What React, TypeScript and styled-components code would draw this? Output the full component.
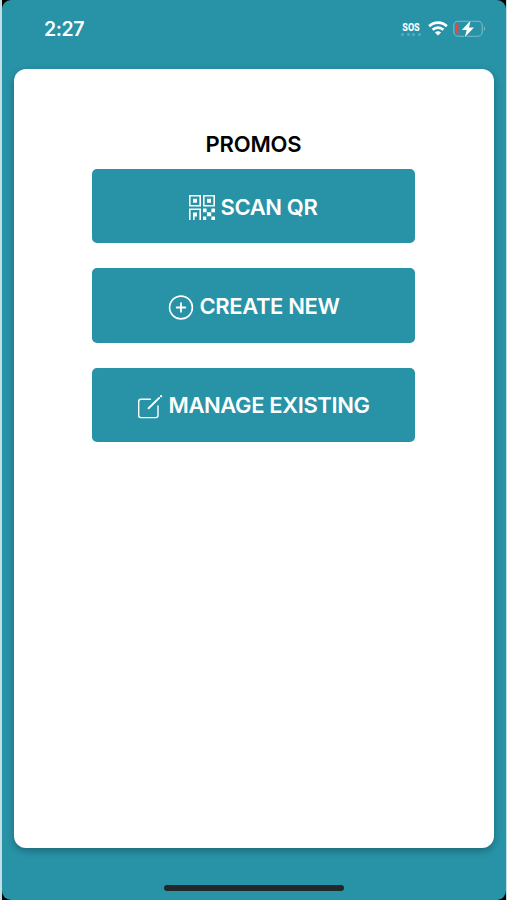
import React from 'react';
import styled, { createGlobalStyle } from 'styled-components';

const TEAL = '#2892a6';

const App = () => {
  return (
    <>
      <GlobalStyle />
      <Device>
        <Screen>
          <StatusBar>
            <Time>2:27</Time>
            <StatusIcons>
              <Sos>
                <span>SOS</span>
                <Dots>
                  <i />
                  <i />
                  <i />
                  <i />
                </Dots>
              </Sos>
              <WifiIcon />
              <BatteryIcon />
            </StatusIcons>
          </StatusBar>
          <Card>
            <Title>PROMOS</Title>
            <Menu>
              <MenuButton>
                <QrIcon />
                <Label $width={98}>SCAN QR</Label>
              </MenuButton>
              <MenuButton>
                <PlusIcon />
                <Label $width={140}>CREATE NEW</Label>
              </MenuButton>
              <MenuButton>
                <EditIcon />
                <Label $width={202}>MANAGE EXISTING</Label>
              </MenuButton>
            </Menu>
          </Card>
          <HomeBar />
        </Screen>
      </Device>
    </>
  );
};

export default App;

const WifiIcon = () => (
  <svg width="20" height="15" viewBox="0 0 20 15" fill="none" stroke="#fff">
    <path d="M1.2 5.2C6.2 0.4 13.8 0.4 18.8 5.2" strokeWidth="2.9" />
    <path d="M4.6 8.8C7.7 5.9 12.3 5.9 15.4 8.8" strokeWidth="2.6" />
    <path d="M10 14.6L6.9 11.5C8.6 9.9 11.4 9.9 13.1 11.5Z" fill="#fff" stroke="none" />
  </svg>
);

const BatteryIcon = () => (
  <svg width="33" height="18" viewBox="0 0 33 18" fill="none">
    <rect x="0.8" y="1.3" width="28.4" height="14.9" rx="4.2" stroke="#7dbcc9" strokeWidth="1.1" />
    <path d="M31 6.6C32.6 7.3 32.6 10.2 31 10.9Z" fill="#7dbcc9" />
    <path d="M5.3 3.3V14.2H4.6C3.3 14.2 2.7 13.4 2.7 12.2V5.3C2.7 4.1 3.3 3.3 4.6 3.3Z" fill="#e8483f" />
    <path
      d="M17.6 0.6L8.8 9.9H13.7L11.7 17.2L21 7.4H16Z"
      fill="#fff"
      stroke={TEAL}
      strokeWidth="1.4"
      strokeLinejoin="round"
      paintOrder="stroke"
    />
  </svg>
);

const QrIcon = () => (
  <svg width="26" height="25" viewBox="0 0 26 25" fill="#fff">
    <path
      fillRule="evenodd"
      d="M0 0H12V11.6H0ZM1.6 1.6V10H10.4V1.6ZM14 0H26V11.6H14ZM15.6 1.6V10H24.4V1.6ZM0 13.4H12V25H10.4V15H1.6V25H0Z"
    />
    <path d="M4 3.8H8V7.8H4ZM18 3.8H22V7.8H18ZM4 17.4H8V21.4H4ZM4 21.4H5.6V25H4Z" />
    <path d="M14 13.6H17.6V17.2H14ZM22.4 13.6H26V17.2H22.4ZM18 17.2H22.2V21.2H18ZM14 21.6H17.2V25H14ZM22.4 21.4H26V25H22.4Z" />
  </svg>
);

const PlusIcon = () => (
  <svg width="26" height="25" viewBox="0 0 26 25" fill="none" stroke="#fff" strokeLinecap="round">
    <circle cx="13" cy="12.5" r="11.4" strokeWidth="1.6" />
    <path d="M13 8.2V16.8M8.7 12.5H17.3" strokeWidth="1.8" />
  </svg>
);

const EditIcon = () => (
  <svg
    width="26"
    height="25"
    viewBox="0 0 26 25"
    fill="none"
    stroke="#fff"
    strokeWidth="1.4"
    strokeLinecap="round"
    strokeLinejoin="round"
  >
    <path d="M13.4 5.2H3.9C2.5 5.2 1.7 6 1.7 7.4V21.6C1.7 22.8 2.5 23.6 3.9 23.6H18.8C20.2 23.6 21 22.8 21 21.6V12" />
    <path d="M11.6 14.3L22.2 3.9" strokeWidth="1.9" />
    <path d="M23.9 2L24.3 2.4" strokeWidth="1.9" />
  </svg>
);

const GlobalStyle = createGlobalStyle`
  * {
    box-sizing: border-box;
  }
  body {
    margin: 0;
    background-color: #c3dfe5;
    font-family: Inter, 'Liberation Sans', sans-serif;
  }
`;

const Device = styled.div`
  height: 900px;
  margin: 0 1.5px;
  background-color: #000;
`;

const Screen = styled.div`
  display: flex;
  flex-direction: column;
  align-items: center;
  height: 900px;
  border-radius: 9px;
  background-color: ${TEAL};
`;

const StatusBar = styled.div`
  display: flex;
  justify-content: space-between;
  width: 100%;
  height: 69px;
  padding: 18px 19.5px 0 42.5px;
  color: #fff;
`;

const Time = styled.div`
  height: 22px;
  font-size: 19.5px;
  font-weight: 600;
  line-height: 22px;
  letter-spacing: -0.4px;
`;

const StatusIcons = styled.div`
  display: flex;
  align-items: flex-start;
  padding-top: 2px;
  svg {
    display: block;
  }
  svg:nth-child(2) {
    margin: 1px 5px 0 7px;
  }
`;

const Sos = styled.div`
  width: 20px;
  padding-top: 2px;
  font-family: Roboto, sans-serif;
  font-size: 9px;
  font-weight: 800;
  line-height: 10px;
  text-align: center;
  span {
    display: block;
    transform: scaleY(1.25);
  }
`;

const Dots = styled.div`
  display: flex;
  justify-content: space-between;
  margin-top: 1px;
  i {
    width: 3px;
    height: 3px;
    border-radius: 50%;
    background-color: #5cabba;
  }
`;

const Card = styled.div`
  display: flex;
  flex-direction: column;
  align-items: center;
  width: 480px;
  height: 778.5px;
  padding-top: 61px;
  border-radius: 12px;
  background-color: #fff;
  box-shadow: 0 3px 7px rgba(0, 0, 0, 0.28);
`;

const Title = styled.h1`
  margin: 0;
  font-size: 22px;
  font-weight: 600;
  line-height: 28px;
  letter-spacing: -0.15px;
  color: #000;
`;

const Menu = styled.div`
  display: grid;
  grid-row-gap: 25px;
  margin-top: 11px;
`;

const MenuButton = styled.button`
  display: flex;
  align-items: center;
  justify-content: center;
  width: 323px;
  height: 74.4px;
  padding: 2px 0 0;
  border: none;
  border-radius: 5px;
  background-color: ${TEAL};
  color: #fff;
  svg {
    flex: none;
    margin-top: 1px;
  }
`;

const Label = styled.span<{ $width: number }>`
  width: ${({ $width }) => $width}px;
  margin: -1px 0 0 6px;
  font-family: Inter, 'Liberation Sans', sans-serif;
  font-size: 22px;
  font-weight: 620;
  line-height: 28px;
  letter-spacing: -0.38px;
  text-align: left;
  white-space: nowrap;
`;

const HomeBar = styled.div`
  width: 180px;
  height: 6px;
  margin-top: 37.5px;
  border-radius: 3px;
  background-color: #222729;
`;
